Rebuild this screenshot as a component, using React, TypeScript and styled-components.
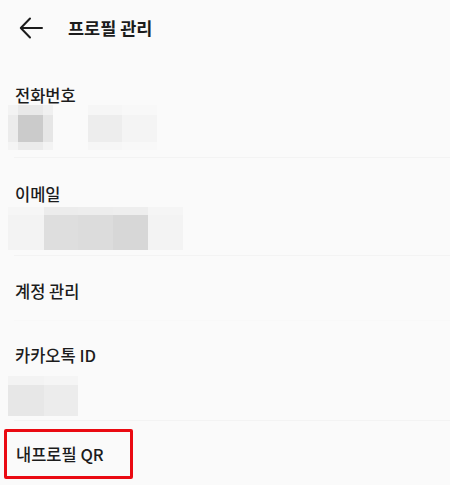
import React from "react";
import styled, { createGlobalStyle } from "styled-components";

const GlobalStyle = createGlobalStyle`
  html, body {
    margin: 0;
    padding: 0;
    background: #fafafa;
  }
  body {
    font-family: "Noto Sans CJK KR", "Noto Sans", sans-serif;
    color: #1c1c1c;
  }
`;

const Screen = styled.div`
  width: 450px;
  height: 485px;
  overflow: hidden;
  background: #fafafa;
`;

const Header = styled.header`
  height: 56px;
  display: flex;
  align-items: center;
  padding-left: 19px;
  gap: 24px;
`;

const BackButton = styled.button`
  border: 0;
  background: none;
  padding: 0;
  width: 25px;
  height: 22px;
  display: flex;
  align-items: center;
  color: #1c1c1c;
`;

const Title = styled.h1`
  margin: 0;
  font-size: 17.5px;
  font-weight: 700;
  line-height: 24px;
`;

const Section = styled.div<{ $top: number; $bottom: number; $line?: string }>`
  padding: ${(p) => p.$top}px 0 ${(p) => p.$bottom}px;
  margin-left: 14px;
  border-bottom: 1px solid ${(p) => p.$line ?? "#f3f3f3"};
`;

const Label = styled.div`
  padding-left: 1px;
  font-size: 16.5px;
  font-weight: 500;
  line-height: 26px;
`;

const Mosaic = styled.div<{ $cols: string; $rows: string; $shift: number }>`
  display: grid;
  grid-template-columns: ${(p) => p.$cols};
  grid-template-rows: ${(p) => p.$rows};
  width: max-content;
  margin: ${(p) => p.$shift}px 0 0 -6px;
`;

const Cell = styled.div<{ $c: string }>`
  background: ${(p) => p.$c};
`;

const QrBox = styled.div`
  box-sizing: border-box;
  margin: 8px 0 0 4px;
  width: 129px;
  height: 50px;
  border: 3px solid #ea0a12;
  border-radius: 2px;
  padding-left: 9px;
  display: flex;
  align-items: center;
  font-size: 16.5px;
  font-weight: 500;
  line-height: 26px;
`;

type MosaicSpec = { cols: number[]; rows: number[]; colors: string[][]; shift: number };

const phone: MosaicSpec = {
  cols: [10, 25, 10, 35, 34, 35],
  rows: [10, 27, 8],
  shift: -3,
  colors: [
    ["#f3f3f3", "#e9e9e9", "#f0f0f0", "transparent", "#f6f6f6", "#f8f8f8"],
    ["#ececec", "#cbcbcb", "#e6e6e6", "transparent", "#ededed", "#f4f4f4"],
    ["#f4f4f4", "#ebebeb", "#f3f3f3", "transparent", "#f6f6f6", "#f8f8f8"],
  ],
};

const email: MosaicSpec = {
  cols: [36, 34, 35, 35, 35],
  rows: [8, 35],
  shift: 0,
  colors: [
    ["#f6f6f6", "#ececec", "#ededed", "#eeeeee", "#f5f5f5"],
    ["#f3f3f3", "#dedede", "#dcdcdc", "#d7d7d7", "#f3f3f3"],
  ],
};

const kakao: MosaicSpec = {
  cols: [36, 34],
  rows: [9, 31],
  shift: 8,
  colors: [
    ["#f3f3f3", "#f5f5f5"],
    ["#e7e7e7", "#ececec"],
  ],
};

const Blurred = ({ spec }: { spec: MosaicSpec }) => (
  <Mosaic
    $cols={spec.cols.map((c) => `${c}px`).join(" ")}
    $rows={spec.rows.map((r) => `${r}px`).join(" ")}
    $shift={spec.shift}
  >
    {spec.colors.flat().map((c, i) => (
      <Cell key={i} $c={c} />
    ))}
  </Mosaic>
);

const BackArrow = () => (
  <svg width="24" height="22" viewBox="0 0 24 22" fill="none">
    <path
      d="M23 11H2M11 1.5L1.8 11l9.2 9.5"
      stroke="currentColor"
      strokeWidth="2"
      strokeLinecap="round"
      strokeLinejoin="round"
    />
  </svg>
);

export default function App() {
  return (
    <Screen>
      <GlobalStyle />
      <Header>
        <BackButton>
          <BackArrow />
        </BackButton>
        <Title>프로필 관리</Title>
      </Header>
      <Section $top={26} $bottom={7}>
        <Label>전화번호</Label>
        <Blurred spec={phone} />
      </Section>
      <Section $top={23} $bottom={5}>
        <Label>이메일</Label>
        <Blurred spec={email} />
      </Section>
      <Section $top={22} $bottom={16} $line="#f8f8f8">
        <Label>계정 관리</Label>
      </Section>
      <Section $top={21} $bottom={4}>
        <Label>카카오톡 ID</Label>
        <Blurred spec={kakao} />
      </Section>
      <QrBox>내프로필 QR</QrBox>
    </Screen>
  );
}
